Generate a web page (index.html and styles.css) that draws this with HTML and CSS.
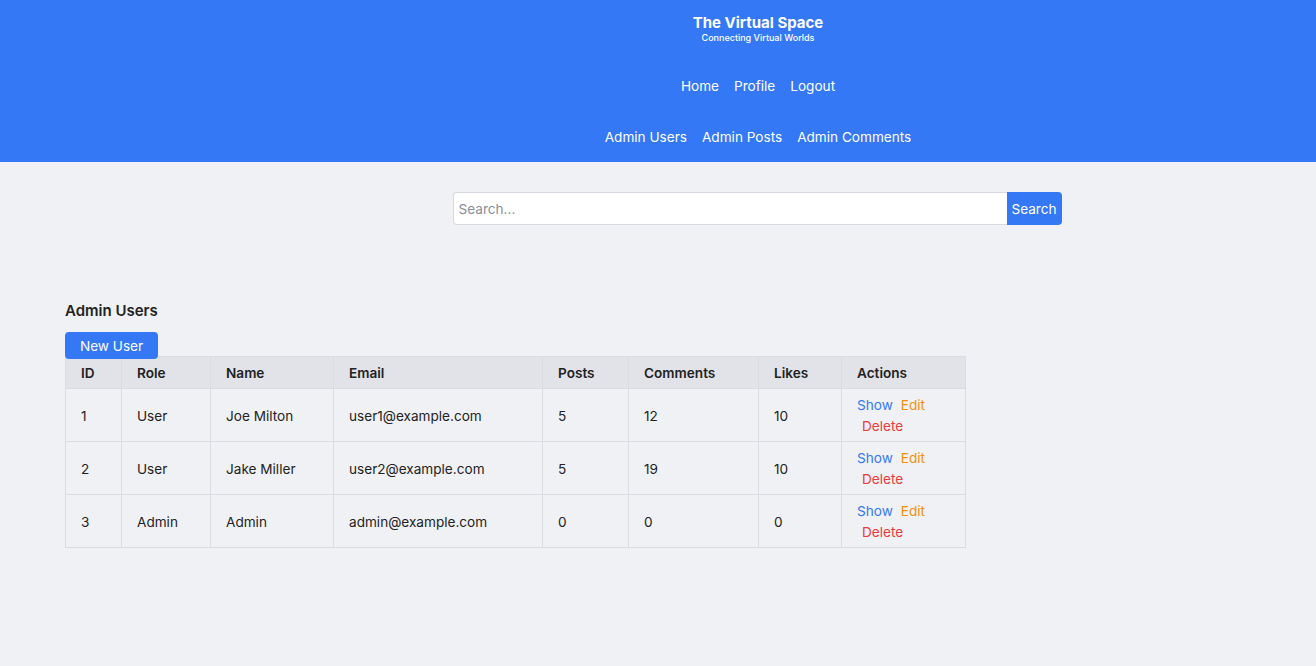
FILE: index.html
```html
<!DOCTYPE html>
<html lang="en">
<head>
<meta charset="utf-8">
<title>The Virtual Space</title>
<link rel="stylesheet" href="styles.css">
</head>
<body>
<header class="site-header">
  <div class="brand">
    <div class="brand-title">The Virtual Space</div>
    <div class="brand-sub">Connecting Virtual Worlds</div>
  </div>
  <nav class="nav nav-main">
    <a href="#">Home</a>
    <a href="#">Profile</a>
    <a href="#">Logout</a>
  </nav>
  <nav class="nav nav-admin">
    <a href="#">Admin Users</a>
    <a href="#">Admin Posts</a>
    <a href="#">Admin Comments</a>
  </nav>
</header>

<div class="search-wrap">
  <form class="search">
    <input class="search-input" type="text" placeholder="Search...">
    <button class="search-btn" type="button">Search</button>
  </form>
</div>

<main class="content">
  <h2 class="page-title">Admin Users</h2>
  <div class="toolbar"><a class="btn-new" href="#">New User</a></div>
  <table class="users">
    <colgroup>
      <col style="width:56px"><col style="width:89px"><col style="width:123px"><col style="width:209px">
      <col style="width:86px"><col style="width:130px"><col style="width:83px"><col style="width:124px">
    </colgroup>
    <thead>
      <tr><th>ID</th><th>Role</th><th>Name</th><th>Email</th><th>Posts</th><th>Comments</th><th>Likes</th><th>Actions</th></tr>
    </thead>
    <tbody>
      <tr><td>1</td><td>User</td><td>Joe Milton</td><td>user1@example.com</td><td>5</td><td>12</td><td>10</td>
        <td class="actions"><a class="a-show" href="#">Show</a><a class="a-edit" href="#">Edit</a><a class="a-del" href="#">Delete</a></td></tr>
      <tr><td>2</td><td>User</td><td>Jake Miller</td><td>user2@example.com</td><td>5</td><td>19</td><td>10</td>
        <td class="actions"><a class="a-show" href="#">Show</a><a class="a-edit" href="#">Edit</a><a class="a-del" href="#">Delete</a></td></tr>
      <tr><td>3</td><td>Admin</td><td>Admin</td><td>admin@example.com</td><td>0</td><td>0</td><td>0</td>
        <td class="actions"><a class="a-show" href="#">Show</a><a class="a-edit" href="#">Edit</a><a class="a-del" href="#">Delete</a></td></tr>
    </tbody>
  </table>
</main>
</body>
</html>
```

FILE: styles.css
```css
* { box-sizing: border-box; }
html, body { margin: 0; padding: 0; }
body {
  background: #f0f1f5;
  font-family: Inter, "Noto Sans", "Liberation Sans", sans-serif;
  color: #222;
  font-size: 13.6px;
  min-height: 666px;
}
a { text-decoration: none; }

.site-header {
  background: #3478f5;
  color: #fff;
  padding: 13px 0 15px 200px;
  display: flex;
  flex-direction: column;
  align-items: center;
}
.brand { text-align: center; }
.brand-title { font-size: 15px; font-weight: 700; line-height: 19px; }
.brand-sub { font-size: 9px; font-weight: 500; line-height: 12px; }
.nav { display: flex; gap: 15px; line-height: 20px; font-size: 13.6px; }
.nav a { color: #fff; }
.nav-main { margin-top: 32px; }
.nav-admin { margin-top: 31px; }

.search-wrap {
  padding-left: 198px;
  display: flex;
  justify-content: center;
  margin-top: 30px;
}
.search {
  display: flex;
  width: 609px;
  height: 33px;
  margin: 0;
}
.search-input {
  flex: 1;
  border: 1px solid #d5d8de;
  border-right: none;
  border-radius: 4px 0 0 4px;
  background: #fff;
  font-family: inherit;
  font-size: 13.6px;
  padding: 0 5px;
  outline: none;
}
.search-input::placeholder { color: #8a8f99; }
.search-btn {
  width: 55px;
  border: none;
  border-radius: 0 4px 4px 0;
  background: #3478f5;
  color: #fff;
  font-family: inherit;
  font-size: 13.6px;
  padding: 0;
}

.content { padding: 75px 65px 0; }
.page-title {
  margin: 0 0 11px;
  padding-top: 1px;
  font-size: 15px;
  font-weight: 600;
  line-height: 20px;
  color: #222;
}
.toolbar { height: 24px; }
.btn-new {
  display: inline-block;
  width: 93px;
  height: 27px;
  line-height: 26px;
  padding-top: 1px;
  text-align: center;
  background: #3478f5;
  color: #fff;
  border-radius: 4px;
  font-size: 13.6px;
}

.users {
  border-collapse: collapse;
  table-layout: fixed;
  width: 900px;
  font-size: 13.6px;
}
.users th, .users td {
  border: 1px solid #d9dce1;
  padding: 6px 15px 4px;
  line-height: 21px;
  text-align: left;
  vertical-align: middle;
}
.users th { background: #e1e3e8; font-weight: 600; color: #222; }
.users td { color: #222; }
.actions a { display: inline-block; }
.a-show { color: #3478f5; }
.a-edit { color: #f0900a; margin-left: 8px; }
.a-del { color: #ec3b3b; margin-left: 5px; }
```
